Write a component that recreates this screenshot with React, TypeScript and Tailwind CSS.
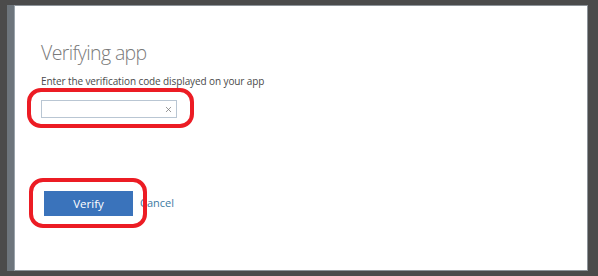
import { X } from 'lucide-react';

export default function App() {
  return (
    <div className="w-[598px] h-[276px] bg-[#4b4b4b] pt-[5px] pl-[7px] overflow-hidden relative" style={{ fontFamily: '"Open Sans", "Noto Sans", sans-serif' }}>
      <div className="flex h-[266px]">
        {/* side strip of the page behind the dialog */}
        <div className="w-[8px] bg-[#6d757c] border-r border-[#9aa3ab]" />
        <div className="w-[573px] bg-white border-t border-r border-b border-[#8d949a] pl-[26px] pt-[33px]">
          <h1 className="text-[19.5px] font-light tracking-[-0.6px] text-[#7a7a7a] leading-[28px]">Verifying app</h1>
          <p className="mt-[7px] text-[10px] tracking-[-0.1px] text-[#4a4a4a] leading-[14px]">
            Enter the verification code displayed on your app
          </p>
          <div className="mt-[12px] w-[136px] h-[18px] border border-[#b9c6d3] flex items-center justify-end pr-[3px]">
            <X className="w-[9px] h-[9px] text-[#777]" strokeWidth={2} />
          </div>
          <div className="mt-[73px] flex items-center gap-[7px]">
            <button className="ml-[3px] w-[89px] h-[25px] bg-[#3a73bb] text-white text-[11.5px]">Verify</button>
            <a className="text-[11px] text-[#3d7aa3]">Cancel</a>
          </div>
        </div>
      </div>
      {/* red annotation ovals */}
      <div className="absolute left-[27px] top-[88px] w-[167px] h-[40px] border-[4px] border-[#ec1c24] rounded-[14px]" />
      <div className="absolute left-[29px] top-[178px] w-[118px] h-[50px] border-[4px] border-[#ec1c24] rounded-[14px]" />
    </div>
  );
}
